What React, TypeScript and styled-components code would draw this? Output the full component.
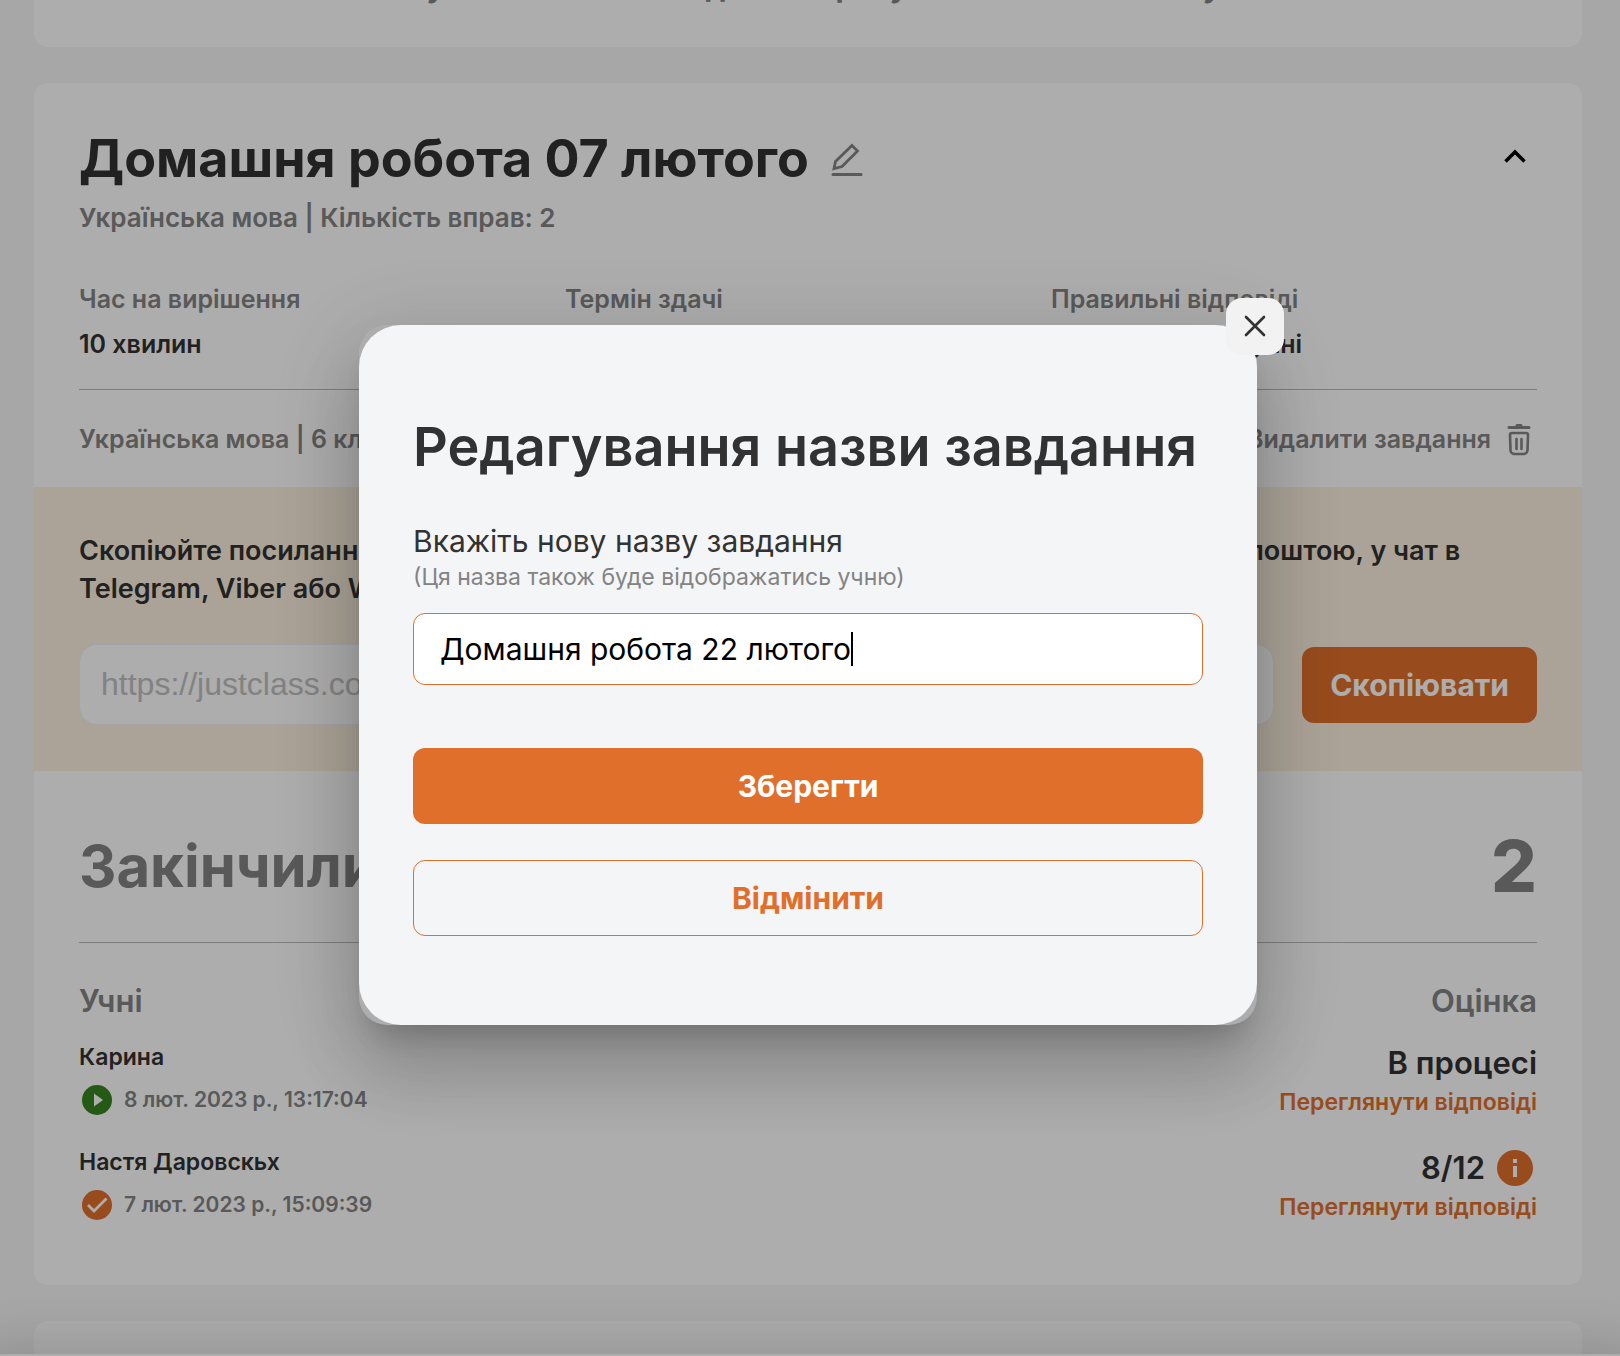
import React, { useLayoutEffect, useRef, useState } from "react";
import styled, { createGlobalStyle } from "styled-components";

const accent = "#e06f2b";
const muted = "#838383";
const ink = "#323232";
const sans = '"Inter", "Liberation Sans", sans-serif';

const GlobalStyle = createGlobalStyle`
  *, *::before, *::after { box-sizing: border-box; }
  html, body { margin: 0; height: 100%; overflow: hidden; }
  body { font-family: ${sans}; color: ${ink}; background: #f7f7f7; }
  h1, h2, h3, p, dl, dd { margin: 0; }
  button, input { font-family: inherit; }
`;

const Page = styled.main`
  display: flex;
  flex-direction: column;
  gap: 36px;
  height: 100vh;
  padding: 0 38px 0 34px;
  overflow: hidden;
`;

const Card = styled.section`
  flex: none;
  background: #fff;
  border-radius: 14px;
`;

const NoticeCard = styled(Card)`
  margin-top: -34px;
  padding: 0 45px 40px;
  text-align: center;
  color: ${muted};
  font-size: 30px;
  line-height: 41px;
  font-weight: 700;
`;

const NextCard = styled(Card)`
  min-height: 120px;
`;

const TaskHeader = styled.header`
  display: flex;
  justify-content: space-between;
  padding: 46px 45px 0;
`;

const TitleRow = styled.div`
  display: flex;
  align-items: center;
  gap: 22px;
`;

const TaskTitle = styled.h1`
  font-size: 52px;
  line-height: 60px;
  font-weight: 700;
`;

const IconButton = styled.button`
  display: grid;
  place-items: center;
  padding: 0;
  border: 0;
  background: none;
  color: ${muted};
`;

const CollapseButton = styled(IconButton)`
  width: 44px;
  height: 54px;
  color: #000;
`;

const Subject = styled.p`
  padding: 14px 45px 0;
  font-size: 26px;
  line-height: 30px;
  font-weight: 600;
  color: ${muted};
`;

const Facts = styled.dl`
  display: grid;
  grid-template-columns: repeat(3, 1fr);
  margin: 0 45px;
  padding: 51px 0 30px;
  border-bottom: 1px solid #b9b9b9;
  font-size: 25px;
  line-height: 30px;
  font-weight: 600;

  dt { color: ${muted}; }
  dd { margin-top: 15px; }
`;

const Actions = styled.div`
  display: flex;
  align-items: center;
  justify-content: space-between;
  height: 97px;
  padding: 0 45px;
  color: ${muted};
  font-size: 25px;
  font-weight: 600;
`;

const DeleteButton = styled.button`
  display: flex;
  align-items: center;
  gap: 10px;
  padding: 0;
  border: 0;
  background: none;
  color: inherit;
  font-size: inherit;
  font-weight: inherit;
`;

const SharePanel = styled.div`
  padding: 45px 45px 46px;
  background: #fcf0df;
`;

const ShareText = styled.p`
  font-size: 27px;
  line-height: 38px;
  font-weight: 600;
  white-space: nowrap;
`;

const ShareRow = styled.div`
  display: flex;
  align-items: center;
  gap: 28px;
  margin-top: 36px;
`;

const LinkInput = styled.input`
  flex: 1;
  min-width: 0;
  height: 81px;
  padding: 0 21px;
  border: 1px solid #eef0f5;
  border-radius: 18px;
  background: #fff;
  color: #c0c0c0;
  font-family: "Liberation Sans", Arial, sans-serif;
  font-size: 32px;
`;

const PrimaryButton = styled.button`
  height: 76px;
  padding: 0 28px;
  border: 0;
  border-radius: 12px;
  background: ${accent};
  color: #fff;
  font-size: 30px;
  font-weight: 700;
`;

const OutlineButton = styled(PrimaryButton)`
  border: 1px solid ${accent};
  background: transparent;
  color: ${accent};
`;

const Results = styled.div`
  padding: 0 45px 36px;
`;

const Summary = styled.div`
  display: flex;
  align-items: center;
  justify-content: space-between;
  height: 172px;
  padding-top: 18px;
  border-bottom: 1px solid #b9b9b9;
  color: ${muted};
`;

const SummaryTitle = styled.h2`
  font-size: 58px;
  line-height: 66px;
  font-weight: 700;
`;

const SummaryCount = styled.strong`
  font-size: 72px;
  line-height: 84px;
  font-weight: 800;
`;

const ColumnHeads = styled.div`
  display: flex;
  justify-content: space-between;
  padding: 40px 0 20px;
  color: ${muted};
  font-size: 31px;
  line-height: 36px;
  font-weight: 600;
`;

const StudentRow = styled.div`
  display: flex;
  justify-content: space-between;
  height: 105px;
`;

const StudentName = styled.h3`
  margin: 4px 0 14px;
  font-size: 23px;
  line-height: 28px;
  font-weight: 600;
`;

const StatusLine = styled.div`
  display: flex;
  align-items: center;
  gap: 12px;
  padding-left: 3px;
  color: ${muted};
  font-size: 21px;
  line-height: 30px;
  font-weight: 600;
`;

const Grade = styled.div`
  display: flex;
  flex-direction: column;
  align-items: flex-end;
  gap: 4px;
  padding-top: 2px;
`;

const GradeValue = styled.div`
  display: flex;
  align-items: center;
  gap: 12px;
  height: 43px;
  font-size: 31px;
  font-weight: 600;
`;

const AnswersLink = styled.a`
  color: ${accent};
  font-size: 23px;
  line-height: 28px;
  font-weight: 600;
  text-decoration: none;
`;

const BottomBar = styled.div`
  position: fixed;
  inset: auto 0 0 0;
  height: 2px;
  background: #fff;
  box-shadow: 0 34px 70px 34px rgba(0, 0, 0, 0.2);
`;

const Backdrop = styled.div`
  position: fixed;
  inset: 0;
  display: flex;
  align-items: center;
  justify-content: center;
  padding: 0 4px 7px 0;
  background: rgba(0, 0, 0, 0.32);
`;

const Dialog = styled.div`
  position: relative;
  width: 898px;
  max-width: 90%;
  border-radius: 28px;
  box-shadow: 0 22px 30px -14px rgba(0, 0, 0, 0.2), 0 48px 76px 6px rgba(0, 0, 0, 0.14),
    0 18px 92px 16px rgba(0, 0, 0, 0.12);
`;

const DialogForm = styled.form`
  display: flex;
  flex-direction: column;
  padding: 90px 54px 89px;
  border-radius: 42px;
  background: #f4f5f7;
`;

const DialogTitle = styled.h2`
  font-size: 54px;
  line-height: 64px;
  font-weight: 600;
  white-space: nowrap;
`;

const FieldLabel = styled.label`
  margin-top: 44px;
  font-size: 30px;
  line-height: 36px;
`;

const FieldHint = styled.span`
  margin-top: 4px;
  color: ${muted};
  font-size: 23px;
  line-height: 28px;
`;

const Field = styled.div`
  position: relative;
  margin: 22px 0 63px;
`;

const NameInput = styled.input`
  display: block;
  width: 100%;
  height: 72px;
  padding: 0 26px;
  border: 1px solid ${accent};
  border-radius: 12px;
  outline: 0;
  background: #fff;
  color: #000;
  caret-color: transparent;
  font-size: 30px;
`;

const Caret = styled.span`
  position: absolute;
  top: 19px;
  width: 2px;
  height: 34px;
  background: #000;
`;

const DialogButtons = styled.div`
  display: grid;
  gap: 36px;
`;

const CloseButton = styled(IconButton)`
  position: absolute;
  top: -27px;
  right: -27px;
  width: 58px;
  height: 57px;
  border-radius: 16px;
  background: #f2f2f2;
  color: ${ink};
`;

const PencilIcon = () => (
  <svg width="32" height="36" viewBox="0 0 32 36" fill="none" stroke="currentColor" strokeWidth="2.8" strokeLinecap="round" strokeLinejoin="miter">
    <path d="M3 27.5 4.500 20.500 21 4.500 26.500 10 11 25.500Z" />
    <path d="M2 33.500h28" strokeWidth="3" />
  </svg>
);

const ChevronIcon = () => (
  <svg width="24" height="16" viewBox="0 0 24 16" fill="none" stroke="currentColor" strokeWidth="3.500">
    <path d="M2.5 13.5 12 4l9.500 9.500" />
  </svg>
);

const TrashIcon = () => (
  <svg width="36" height="36" viewBox="0 0 36 36" fill="none" stroke="currentColor" strokeWidth="2.600" strokeLinecap="round" strokeLinejoin="round">
    <path d="M8 6.500h20M16 4.500h4" strokeWidth="3" />
    <path d="M9 14a2 2 0 0 1 2-2h14a2 2 0 0 1 2 2l-.5 15a4 4 0 0 1-4 4h-9a4 4 0 0 1-4-4Z" />
    <path d="M15.500 18v10M20.500 18v10" />
  </svg>
);

const CloseIcon = () => (
  <svg width="22" height="22" viewBox="0 0 22 22" fill="none" stroke="currentColor" strokeWidth="2.600" strokeLinecap="round">
    <path d="m2 2 18 18M20 2 2 20" />
  </svg>
);

const StatusIcon = ({ done }: { done: boolean }) => (
  <svg width="30" height="30" viewBox="0 0 30 30">
    <circle cx="15" cy="15" r="15" fill={done ? accent : "#358421"} />
    {done ? (
      <path d="m6 15 6 6L24.500 8.500" fill="none" stroke="#fff" strokeWidth="2.800" />
    ) : (
      <path d="M12 8.500v13l9-6.500Z" fill="#fff" />
    )}
  </svg>
);

const InfoIcon = () => (
  <svg width="36" height="36" viewBox="0 0 36 36">
    <circle cx="18" cy="18" r="18" fill={accent} />
    <path d="M16 9h4v4h-4zM16 16h4v11h-4z" fill="#fff" />
  </svg>
);

const InfoButton = styled(IconButton)`
  margin-right: 4px;
`;

const facts = [
  ["Час на вирішення", "10 хвилин"],
  ["Термін здачі", "8 лютого"],
  ["Правильні відповіді", "Не відразу доступні"],
];

const students = [
  { name: "Карина", date: "8 лют. 2023 р., 13:17:04", grade: "В процесі", done: false },
  { name: "Настя Даровскьх", date: "7 лют. 2023 р., 15:09:39", grade: "8/12", done: true },
];

function NameField() {
  const [value, setValue] = useState("Домашня робота 22 лютого");
  const [caretX, setCaretX] = useState(0);
  const input = useRef<HTMLInputElement>(null);

  useLayoutEffect(() => {
    const ctx = document.createElement("canvas").getContext("2d");
    if (!ctx || !input.current) return;
    const style = getComputedStyle(input.current);
    ctx.font = `${style.fontWeight} ${style.fontSize} ${style.fontFamily}`;
    setCaretX(Math.round(parseFloat(style.paddingLeft) + ctx.measureText(value).width) + 1);
  }, [value]);

  return (
    <Field>
      <NameInput id="task-name" ref={input} value={value} onChange={(e) => setValue(e.target.value)} />
      <Caret style={{ left: caretX }} />
    </Field>
  );
}

export default function App() {
  return (
    <>
      <GlobalStyle />
      <Page>
        <NoticeCard>І тут можна змінити для всіх рахунків або на кожному</NoticeCard>

        <Card>
          <TaskHeader>
            <TitleRow>
              <TaskTitle>Домашня робота 07 лютого</TaskTitle>
              <IconButton aria-label="Редагувати назву"><PencilIcon /></IconButton>
            </TitleRow>
            <CollapseButton aria-label="Згорнути"><ChevronIcon /></CollapseButton>
          </TaskHeader>
          <Subject>Українська мова | Кількість вправ: 2</Subject>
          <Facts>
            {facts.map(([label, value]) => (
              <div key={label}>
                <dt>{label}</dt>
                <dd>{value}</dd>
              </div>
            ))}
          </Facts>
          <Actions>
            <span>Українська мова | 6 клас</span>
            <DeleteButton>Видалити завдання <TrashIcon /></DeleteButton>
          </Actions>
          <SharePanel>
            <ShareText>
              Скопіюйте посилання на дане завдання та надішліть його вашим учням електронною поштою, у чат в
              <br />
              Telegram, Viber або WhatsApp
            </ShareText>
            <ShareRow>
              <LinkInput aria-label="Посилання на завдання" readOnly value="https://justclass.com.ua/" />
              <PrimaryButton>Скопіювати</PrimaryButton>
            </ShareRow>
          </SharePanel>
          <Results>
            <Summary>
              <SummaryTitle>Закінчили</SummaryTitle>
              <SummaryCount>2</SummaryCount>
            </Summary>
            <ColumnHeads>
              <span>Учні</span>
              <span>Оцінка</span>
            </ColumnHeads>
            {students.map((s) => (
              <StudentRow key={s.name}>
                <div>
                  <StudentName>{s.name}</StudentName>
                  <StatusLine><StatusIcon done={s.done} />{s.date}</StatusLine>
                </div>
                <Grade>
                  <GradeValue>
                    {s.grade}
                    {s.done && <InfoButton aria-label="Докладніше"><InfoIcon /></InfoButton>}
                  </GradeValue>
                  <AnswersLink href="#answers">Переглянути відповіді</AnswersLink>
                </Grade>
              </StudentRow>
            ))}
          </Results>
        </Card>

        <NextCard />
      </Page>
      <BottomBar />

      <Backdrop>
        <Dialog role="dialog" aria-modal="true" aria-labelledby="dialog-title">
          <DialogForm onSubmit={(e) => e.preventDefault()}>
            <DialogTitle id="dialog-title">Редагування назви завдання</DialogTitle>
            <FieldLabel htmlFor="task-name">Вкажіть нову назву завдання</FieldLabel>
            <FieldHint>(Ця назва також буде відображатись учню)</FieldHint>
            <NameField />
            <DialogButtons>
              <PrimaryButton type="submit">Зберегти</PrimaryButton>
              <OutlineButton type="button">Відмінити</OutlineButton>
            </DialogButtons>
          </DialogForm>
          <CloseButton aria-label="Закрити"><CloseIcon /></CloseButton>
        </Dialog>
      </Backdrop>
    </>
  );
}
